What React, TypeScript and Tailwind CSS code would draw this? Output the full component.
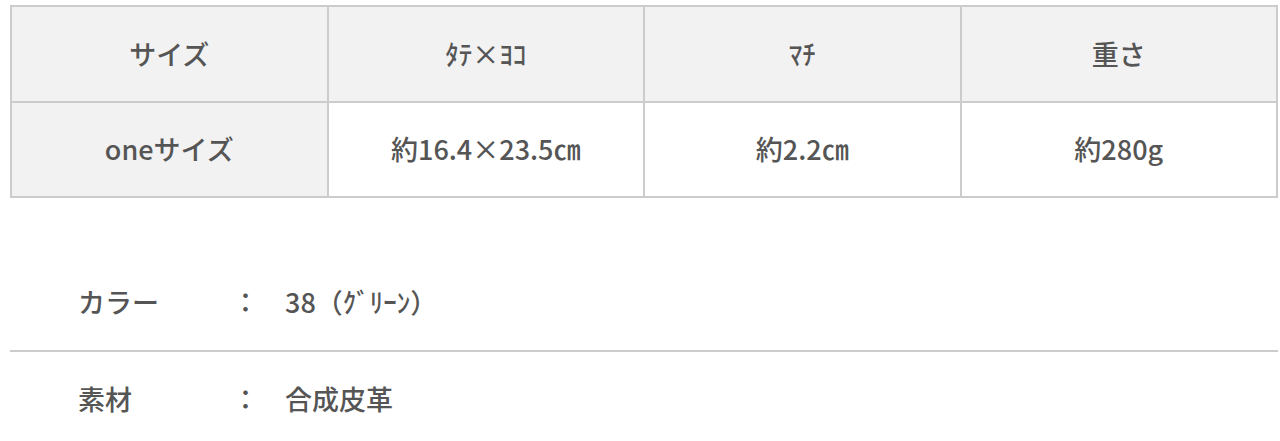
import React from "react";

const font = { fontFamily: '"Noto Sans CJK JP", "Noto Sans", sans-serif' };

export default function App() {
  return (
    <div className="w-[1280px] h-[441px] bg-white text-[#555] overflow-hidden" style={font}>
      <div className="pt-[5px] pl-[10px] pr-[2px]">
        <table className="w-full border-collapse table-fixed text-[27px] font-medium">
          <tbody>
            <tr className="h-[96px]">
              <td className="border-2 border-[#ccc] bg-[#f2f2f2] text-center">サイズ</td>
              <td className="border-2 border-[#ccc] bg-[#f2f2f2] text-center">ﾀﾃ×ﾖｺ</td>
              <td className="border-2 border-[#ccc] bg-[#f2f2f2] text-center">ﾏﾁ</td>
              <td className="border-2 border-[#ccc] bg-[#f2f2f2] text-center">重さ</td>
            </tr>
            <tr className="h-[95px]">
              <td className="border-2 border-[#ccc] bg-[#f2f2f2] text-center">oneサイズ</td>
              <td className="border-2 border-[#ccc] text-center">約16.4×23.5㎝</td>
              <td className="border-2 border-[#ccc] text-center">約2.2㎝</td>
              <td className="border-2 border-[#ccc] text-center">約280g</td>
            </tr>
          </tbody>
        </table>
      </div>
      <div className="mt-[56px] pl-[10px] pr-[2px] text-[27px] font-medium">
        <div className="flex items-center h-[98px] border-b-2 border-[#ccc] pl-[68px]">
          <span className="w-[154px]">カラー</span>
          <span className="w-[53px]">：</span>
          <span>38（ｸﾞﾘｰﾝ）</span>
        </div>
        <div className="flex items-center h-[94px] pl-[68px]">
          <span className="w-[154px]">素材</span>
          <span className="w-[53px]">：</span>
          <span>合成皮革</span>
        </div>
      </div>
    </div>
  );
}
